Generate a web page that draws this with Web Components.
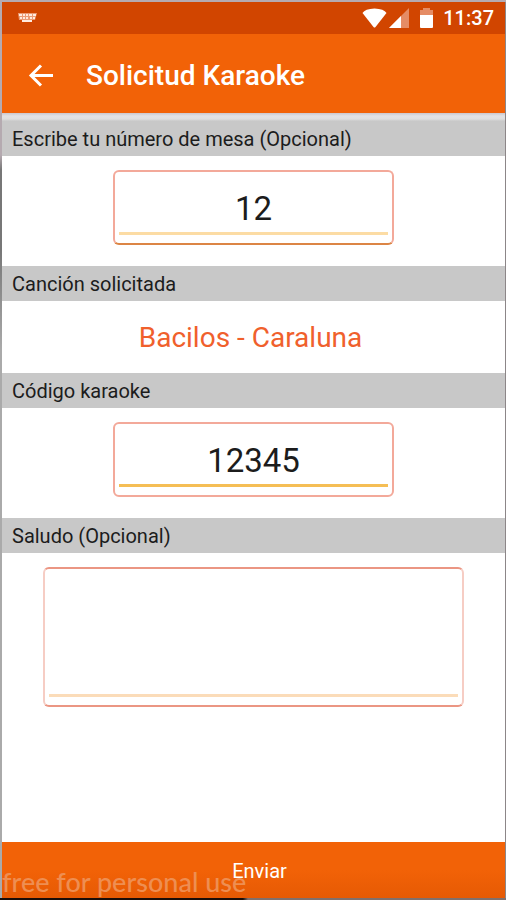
<!DOCTYPE html>
<html lang="es">
<head>
<meta charset="utf-8">
<meta name="viewport" content="width=device-width, initial-scale=1">
<title>Solicitud Karaoke</title>
<style>
html, body { margin: 0; height: 100%; }
body { font-family: Roboto, "Liberation Sans", sans-serif; color: #1c1c1c; }
</style>
</head>
<body>
<karaoke-screen></karaoke-screen>
<script>
class BaseElement extends HTMLElement {
  connectedCallback() {
    if (!this.shadowRoot) this.attachShadow({ mode: "open" }).innerHTML = this.render();
  }
}

customElements.define("status-bar", class extends BaseElement {
  render() {
    return `<style>
      :host { display: flex; align-items: center; height: 32px; padding: 0 11px 0 14px; background: #d14500; color: #fff; font-size: 20px; font-weight: 500; line-height: 24px; }
      .left { flex: 1; display: flex; }
      .right { display: flex; align-items: center; }
      svg { display: block; }
      .wifi { margin-right: 2px; }
      .signal { margin-right: 10px; }
      .battery { margin-right: 9px; }
    </style>
    <div class="left"><svg width="22" height="12" viewBox="0 0 22 12" aria-hidden="true">
      <path d="M2 1H21L19 8H16V10H6V8H3Z" fill="#fbd5c4" opacity=".6"/>
      <path d="M3 2h3v2H3zM7 2h2v2H7zM10 2h2v2h-2zM13 2h3v2h-3zM17 2h3v2h-3zM4 5h2v2H4zM7 5h2v2H7zM10 5h2v2h-2zM14 5h2v2h-2zM17 5h2v2h-2zM6 8h10v2H6z" fill="#ffeade"/>
    </svg></div>
    <div class="right">
      <svg class="wifi" width="25" height="20" viewBox="0 0 25 20" aria-hidden="true"><path d="M.5 5Q3 .8 12.500 .5Q22 .8 24.500 5L13.500 19Q12.500 20 11.500 19Z" fill="#fff"/></svg>
      <svg class="signal" width="20" height="20" viewBox="0 0 20 20" aria-hidden="true"><path d="M20 0V20H0Z" fill="#e58c65"/><path d="M12 8V20H0Z" fill="#fff"/></svg>
      <svg class="battery" width="15" height="20" viewBox="0 0 15 20" aria-hidden="true"><path d="M4 0h7v2h3v5H1V2h3z" fill="#e58c65"/><path d="M1 7h13v12q0 1-1 1H2q-1 0-1-1z" fill="#fff"/></svg>
      <span>11:37</span>
    </div>`;
  }
});

customElements.define("app-bar", class extends BaseElement {
  render() {
    return `<style>
      :host { display: block; }
      header { display: flex; align-items: center; gap: 24px; height: 79px; padding: 4px 18px 0; box-sizing: border-box; background: #f26207; color: #fff; }
      button { width: 42px; height: 42px; padding: 0; border: 0; background: none; color: inherit; display: grid; place-items: center; }
      h1 { margin: 0; font-size: 28px; line-height: 36px; font-weight: 500; }
      .shade { height: 8px; background: linear-gradient(#cbc7ce, #e2e2e4 3px, #dfdfdf 6px, #c9c9c9); }
    </style>
    <header>
      <button type="button" aria-label="Volver"><svg width="26" height="24" viewBox="0 0 26 24" fill="none" stroke="#fff" stroke-width="3" aria-hidden="true"><path d="M25 11.500H3.500M13 1.500L3 11.500L13 21.500"/></svg></button>
      <h1><slot></slot></h1>
    </header><div class="shade"></div>`;
  }
});

const sectionStyles = `
  :host { display: block; }
  .band { display: block; margin: 0; padding: 2px 10px 0; height: 35px; box-sizing: border-box; background: #c8c8c8; font-size: 20px; line-height: 33px; font-weight: 400; color: #1c1c1c; }`;

customElements.define("text-field", class extends BaseElement {
  render() {
    const multi = this.hasAttribute("multiline");
    const control = multi
      ? `<textarea id="control"></textarea>`
      : `<input id="control" type="text" inputmode="numeric" value="${this.getAttribute("value") || ""}">`;
    return `<style>${sectionStyles}
      .content { padding: 14px 0 21px; }
      .box { box-sizing: border-box; width: min(100%, 281px); height: 75px; margin: 0 auto; padding: 4px 4px 8px; border: 2px solid #f3a99a; border-bottom-color: var(--edge, #f3a99a); border-radius: 6px; display: flex; }
      :host([multiline]) .box { width: auto; height: 140px; margin: 0 41px; border-color: #f6cdc4; border-top-color: #eb9683; border-bottom-color: #eb9683; }
      input, textarea { flex: 1; min-width: 0; box-sizing: border-box; margin: 0; padding: 10px 0 0; border: 0; border-bottom: 3px solid var(--line, #fcdca4); background: none; outline: 0; resize: none; font: 400 33px/44px Roboto, sans-serif; color: #1c1c1c; text-align: center; }
      textarea { text-align: left; font-size: 20px; line-height: 28px; }
    </style>
    <label class="band" for="control"><slot></slot></label>
    <div class="content"><div class="box">${control}</div></div>`;
  }
});

customElements.define("song-section", class extends BaseElement {
  render() {
    return `<style>${sectionStyles}
      p { margin: 0; padding: 19px 14px 17px 8px; text-align: center; font-size: 28px; line-height: 36px; color: #f0602c; }
    </style>
    <h2 class="band"><slot name="title"></slot></h2><p><slot></slot></p>`;
  }
});

customElements.define("submit-bar", class extends BaseElement {
  render() {
    return `<style>
      :host { display: block; }
      button { display: block; width: 100%; height: 56px; padding: 1px 0 0 12px; border: 0; background: linear-gradient(#f26207 50%, #e65a04); color: #fff; font: 400 20px/24px Roboto, sans-serif; }
    </style><button type="button"><slot></slot></button>`;
  }
});

customElements.define("karaoke-screen", class extends BaseElement {
  render() {
    return `<style>
      :host { position: relative; display: flex; flex-direction: column; min-height: 100vh; box-sizing: border-box; padding: 2px 1px 2px 2px; background: linear-gradient(90deg, #1a0d08 48%, #80706c 49%) bottom / 100% 2px no-repeat, linear-gradient(#b5aab0, #b5aab0) top / 100% 2px no-repeat, linear-gradient(#b5aab0 155px, #777 170px, #777 250px, #aaa 350px) left / 2px 100% no-repeat, #8c8688; overflow: hidden; }
      main { flex: 1; background: #fff; }
      .watermark { position: absolute; left: 2px; bottom: 2px; font: 500 27px/32px Lato, sans-serif; color: #ee8e52; pointer-events: none; white-space: nowrap; }
    </style>
    <status-bar></status-bar>
    <app-bar>Solicitud Karaoke</app-bar>
    <main>
      <text-field value="12" style="--edge:#dc8545">Escribe tu número de mesa (Opcional)</text-field>
      <song-section><span slot="title">Canción solicitada</span>Bacilos - Caraluna</song-section>
      <text-field value="12345" style="--line:#f5be55">Código karaoke</text-field>
      <text-field multiline style="--line:#fbdcb9">Saludo (Opcional)</text-field>
    </main>
    <submit-bar>Enviar</submit-bar>
    <span class="watermark">free for personal use</span>`;
  }
});
</script>
</body>
</html>
